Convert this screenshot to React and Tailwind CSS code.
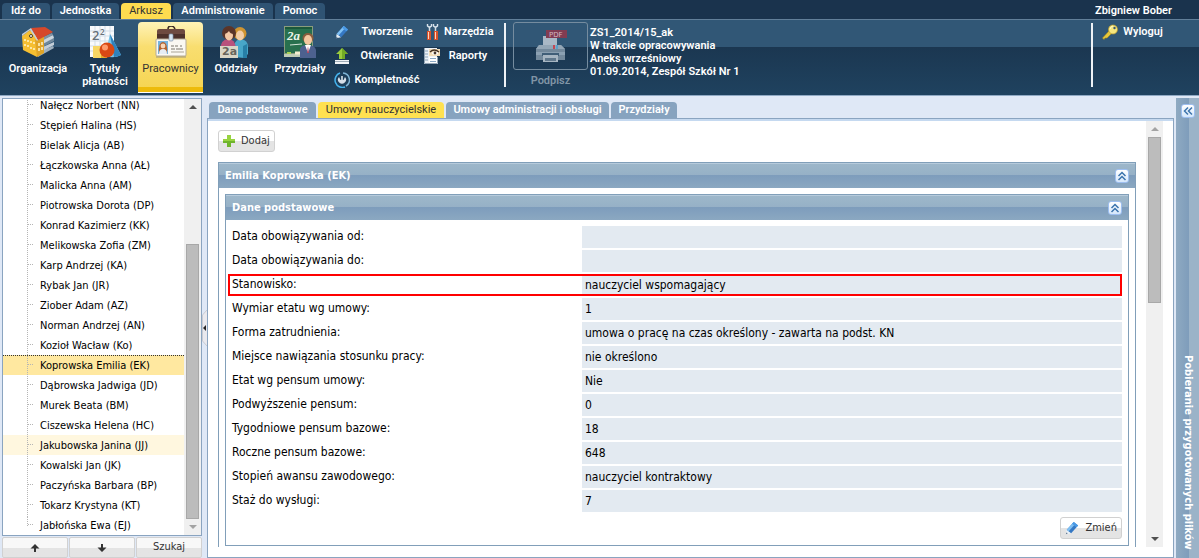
import React, { useState } from "react";

const menuTabs = [
  { name: "Idź do", width: "w-12" },
  { name: "Jednostka", width: "w-[67px]" },
  { name: "Arkusz", width: "w-[50px]" },
  { name: "Administrowanie", width: "w-[100px]" },
  { name: "Pomoc", width: "w-[50px]" },
];

const contractTabs = [
  { name: "Dane podstawowe", width: "w-[107px]" },
  { name: "Umowy nauczycielskie", width: "w-[126px]" },
  { name: "Umowy administracji i obsługi", width: "w-[163px]" },
  { name: "Przydziały", width: "w-[66px]" },
];

const employees = [
  "Nałęcz Norbert (NN)",
  "Stępień Halina (HS)",
  "Bielak Alicja (AB)",
  "Łączkowska Anna (AŁ)",
  "Malicka Anna (AM)",
  "Piotrowska Dorota (DP)",
  "Konrad Kazimierz (KK)",
  "Melikowska Zofia (ZM)",
  "Karp Andrzej (KA)",
  "Rybak Jan (JR)",
  "Ziober Adam (AZ)",
  "Norman Andrzej (AN)",
  "Kozioł Wacław (Ko)",
  "Koprowska Emilia (EK)",
  "Dąbrowska Jadwiga (JD)",
  "Murek Beata (BM)",
  "Ciszewska Helena (HC)",
  "Jakubowska Janina (JJ)",
  "Kowalski Jan (JK)",
  "Paczyńska Barbara (BP)",
  "Tokarz Krystyna (KT)",
  "Jabłońska Ewa (EJ)",
];

const fields = [
  { id: "od", label: "Data obowiązywania od:", value: "" },
  { id: "do", label: "Data obowiązywania do:", value: "" },
  { id: "stanowisko", label: "Stanowisko:", value: "nauczyciel wspomagający", marked: true },
  { id: "wymiar", label: "Wymiar etatu wg umowy:", value: "1" },
  { id: "forma", label: "Forma zatrudnienia:", value: "umowa o pracę na czas określony - zawarta na podst. KN" },
  { id: "miejsce", label: "Miejsce nawiązania stosunku pracy:", value: "nie określono" },
  { id: "etat", label: "Etat wg pensum umowy:", value: "Nie" },
  { id: "podwyzszenie", label: "Podwyższenie pensum:", value: "0" },
  { id: "tygodniowe", label: "Tygodniowe pensum bazowe:", value: "18" },
  { id: "roczne", label: "Roczne pensum bazowe:", value: "648" },
  { id: "awans", label: "Stopień awansu zawodowego:", value: "nauczyciel kontraktowy" },
  { id: "staz", label: "Staż do wysługi:", value: "7" },
];

// ---------- icons ----------

function BuildingIcon() {
  return (
    <svg width="32" height="32" viewBox="0 0 32 32">
      <path d="M14 27l17-7 1 2-16 9z" fill="#9fb0be" />
      <path d="M14 24l18-8v3l-17 9z" fill="#c3ced8" />
      <path d="M14 20l18-8v3l-17 9z" fill="#6f879a" />
      <path d="M15 16l16-7 1 3-17 9z" fill="#ccd6de" />
      <path d="M16 13l14-6 1 2-15 8z" fill="#7e95a7" />
      <path d="M0 10l8-6 7 6v21L1 24z" fill="#f6bf32" />
      <path d="M13 14l9-4v17l-7 4z" fill="#e0a528" />
      <path d="M9 2l14-1 8 5-15 8z" fill="#d6482a" />
      <path d="M9 2l7 12-1 1L8 4 0 10V8z" fill="#c7cfd6" />
      <circle cx="9" cy="10" r="1.500" fill="#fff" stroke="#4c4020" />
      <path d="M3 13v2M6 14v2M9 15v2M12 16v2M3 18v2M6 19v2M9 21v2M12 22v2M17 17v3M20 16v3M17 22v3M20 21v3" stroke="#fff5c9" strokeWidth="1.500" />
    </svg>
  );
}

function MathIcon() {
  return (
    <svg width="32" height="32" viewBox="0 0 32 32">
      <path d="M1 0h24v31H1z" fill="#f8fafc" />
      <path d="M1 5h24M1 10h24M1 15h24M1 20h24M1 25h24M6 0v31M11 0v31M16 0v31M21 0v31" stroke="#d3dde8" />
      <text x="3" y="14" fontSize="13" fill="#667079" fontFamily="Open Sans, sans-serif">2</text>
      <text x="11" y="9" fontSize="8" fill="#667079" fontFamily="Open Sans, sans-serif">2</text>
      <path d="M21 8l11 21q-7 4-16 1z" fill="#79c4ea" />
      <path d="M21 8l11 21q-4 2-7 2z" fill="#2f82bd" />
      <path d="M4 20h8v12H4z" fill="#f7d765" />
      <path d="M12 20h6v12h-6z" fill="#e2aa2c" />
      <circle cx="18" cy="24" r="7.500" fill="#d94814" />
      <circle cx="16" cy="21.500" r="3" fill="#ff9a6c" />
    </svg>
  );
}

function BadgeIcon() {
  return (
    <svg width="32" height="32" viewBox="0 0 32 32">
      <path d="M13 3q0-3 3-3t4 3" fill="none" stroke="#3d2a24" strokeWidth="1.500" />
      <rect x="2" y="3" width="28" height="14" rx="2" fill="#6e4a40" />
      <path d="M2 8h28v5H2z" fill="#4d312b" />
      <rect x="1" y="13" width="30" height="17" rx="1" fill="#faf8f2" stroke="#b5ab97" />
      <rect x="14" y="8" width="4" height="7" rx="1" fill="#d6e5f2" stroke="#8297ad" strokeWidth=".7" />
      <rect x="3" y="15" width="10" height="13" fill="#75b4e0" />
      <path d="M4 28q-1-12 4-12t4 12z" fill="#b3622e" />
      <circle cx="8" cy="20" r="2.400" fill="#f8d6b8" />
      <path d="M4 28q0-5 4-5t4 5z" fill="#e6edf5" />
      <path d="M16 20h3m1 0h3m2 0h2M16 23h4m1 0h7" stroke="#7b766c" />
      <path d="M16 26h13" stroke="#aaa496" />
      <path d="M1 31h30" stroke="#9f967f" />
    </svg>
  );
}

function ClassIcon() {
  return (
    <svg width="32" height="32" viewBox="0 0 32 32">
      <path d="M14 31V19q2-6 7-6 7 1 7 8v7l-4 4z" fill="#48a6c9" />
      <path d="M23 20v12h4V18z" fill="#277fa7" />
      <circle cx="20" cy="7.500" r="6.500" fill="#cf9431" />
      <ellipse cx="20" cy="9.500" rx="4" ry="5" fill="#f3cda6" />
      <path d="M0 24q1-11 8-11t8 9v3z" fill="#b8527c" />
      <circle cx="9" cy="7" r="7" fill="#5b3529" />
      <ellipse cx="9" cy="9.500" rx="4" ry="5" fill="#f4c9a6" />
      <path d="M4 8q1-5 5-5 4 1 5 5-4 0-5-3-2 3-5 3z" fill="#5b3529" />
      <path d="M0 20h18v12H0z" fill="#d9d6c6" />
      <text x="2" y="29" fontSize="11" fontWeight="600" fill="#67655c" fontFamily="DejaVu Sans, sans-serif">2a</text>
    </svg>
  );
}

function BoardIcon() {
  return (
    <svg width="32" height="32" viewBox="0 0 32 32">
      <path d="M0 0h29v30H0z" fill="#8a9c7c" />
      <path d="M1 1h27v26H1z" fill="#28704e" />
      <path d="M1 1h27v2H1z" fill="#1b583b" />
      <text x="3" y="14" fontSize="13" fontStyle="italic" fill="#edf5e8" fontFamily="Liberation Serif, serif">2a</text>
      <path d="M6 19l12-1" stroke="#d5e5d8" />
      <path d="M0 28h29v3H0z" fill="#bfcbb5" />
      <path d="M3 27h4" stroke="#a9d058" strokeWidth="2" />
      <path d="M11 27h5" stroke="#f3ecd0" strokeWidth="3" />
      <path d="M16 32v-9q1-4 7-4 8 0 9 5v8z" fill="#4d618f" />
      <path d="M21 19l3 8 3-8z" fill="#fff" />
      <path d="M24 20l-1 7h2z" fill="#b04560" />
      <ellipse cx="24" cy="12" rx="5.500" ry="5" fill="#8a5d3d" />
      <ellipse cx="24" cy="14" rx="4" ry="5" fill="#f4c8a0" />
    </svg>
  );
}

function PencilIcon() {
  return (
    <svg width="14" height="14" viewBox="0 0 16 16">
      <path d="M1 15l1-5 5 4z" fill="#e9f1f8" />
      <path d="M2 10L10 1l5 4-8 9z" fill="#3578c4" />
      <path d="M2 10L10 1l2 2-8 9z" fill="#7fc0f4" />
      <path d="M10 1l5 4-2 2-5-4z" fill="#4a9ae6" />
      <path d="M1 15l1-2 1 1z" fill="#233e5c" />
    </svg>
  );
}

function ToolsIcon() {
  return (
    <svg width="16" height="16" viewBox="0 0 16 16">
      <path d="M5.500 3v5M11.500 3v5" stroke="#d5dde4" strokeWidth="1.500" />
      <path d="M3.500 0v2q2 2 4 0V0M9.500 0v2q2 2 4 0V0" fill="none" stroke="#d9e3ec" strokeWidth="1.400" />
      <path d="M3 7h4v9H3zM10 7h4v9h-4z" fill="#d8512a" />
      <path d="M4.500 8v7M11.500 8v7" stroke="#fbd4c0" />
    </svg>
  );
}

function OpenIcon() {
  return (
    <svg width="16" height="16" viewBox="0 0 16 16">
      <path d="M1 12h14v4H1z" fill="#f2f5f8" />
      <path d="M1 13.500h14" stroke="#9fadb8" />
      <path d="M8 0l6 6h-3v5H5V6H2z" fill="#9acb3c" />
      <path d="M8 0l6 6h-3v5H8z" fill="#72aa25" />
    </svg>
  );
}

function ReportIcon() {
  return (
    <svg width="16" height="16" viewBox="0 0 16 16">
      <path d="M0 0h13v16H0z" fill="#eef2f6" />
      <path d="M1 3h3M1 6h3M1 9h3M1 12h3" stroke="#8aa3ba" />
      <path d="M5 1h11v7H5z" fill="#f2dcb8" />
      <path d="M6 4q4-4 9 0" fill="none" stroke="#433022" strokeWidth="1.400" />
      <ellipse cx="11" cy="5" rx="3" ry="1.600" fill="#fff" />
      <circle cx="11" cy="5" r="1.400" fill="#44352c" />
      <path d="M5 9h9v7H5z" fill="#fff" />
      <path d="M6 10.500h6M6 13.500h6" stroke="#8ba8c4" />
      <path d="M.5 0v15.500h13V9" fill="none" stroke="#93a5b6" />
    </svg>
  );
}

function PowerIcon() {
  return (
    <svg width="16" height="16" viewBox="0 0 16 16">
      <path d="M6 1a7 7 0 1 0 5 14" fill="none" stroke="#45b4ee" strokeWidth="1.500" />
      <path d="M9 1a7 7 0 0 1 3 13" fill="none" stroke="#7fb4d6" strokeWidth="1.500" />
      <path d="M5 5a4 4 0 1 0 6 0L9.500 8h-3z" fill="#d5dee8" />
      <path d="M8 4v4" stroke="#e9eff5" strokeWidth="1.500" />
    </svg>
  );
}

function PrinterIcon() {
  return (
    <svg width="32" height="34" viewBox="0 0 32 34">
      <path d="M8 7h14v11H8z" fill="#a9b8c6" />
      <path d="M4 16h22l4 4v11H1V20z" fill="#73899c" />
      <path d="M4 16h22l4 4H1z" fill="#93a6b6" />
      <path d="M1 23h29v3H1z" fill="#8ba0b2" />
      <path d="M7 24h17v3H7z" fill="#405e78" />
      <path d="M8 26h15v7H8z" fill="#a7b6c3" />
      <path d="M10 29h11v3H10z" fill="#60788d" />
      <path d="M18 16h2v4h-2z" fill="#c34855" />
      <path d="M21 16h2v4h-2z" fill="#5ba0c8" />
      <path d="M11 1h21v8H11z" fill="#823c52" />
      <text x="14" y="8" fontSize="7" fill="#d0b7c3" fontFamily="DejaVu Sans, sans-serif">PDF</text>
    </svg>
  );
}

function KeyIcon() {
  return (
    <svg width="16" height="16" viewBox="0 0 16 16">
      <path d="M7 7l3 2-5 5H3l-1 1.500L.5 14z" fill="#e6c83c" stroke="#a98a1a" strokeWidth=".6" />
      <circle cx="11" cy="5.500" r="4.500" fill="#f6e67c" stroke="#b99a2a" strokeWidth=".7" />
      <circle cx="12.500" cy="4" r="1.200" fill="#395671" />
      <path d="M8 5q1-3 3-3" stroke="#fffbd0" fill="none" />
    </svg>
  );
}

function PlusIcon() {
  return (
    <svg width="12" height="12" viewBox="0 0 12 12">
      <path d="M4 0h4v4h4v4H8v4H4V8H0V4h4z" fill="#6fb52c" />
      <path d="M4 0h4v4h4v2H0V4h4z" fill="#98d341" />
    </svg>
  );
}

function Arrow({ down }) {
  return (
    <svg width="10" height="8" viewBox="0 0 10 8" className={down ? "rotate-180" : ""}>
      <path d="M5 0l4.500 4.500H6V8H4V4.500H.5z" fill="#333" />
    </svg>
  );
}

function Chevrons({ left }) {
  return (
    <svg width="10" height="10" viewBox="0 0 10 10" className={left ? "-rotate-90" : ""}>
      <path d="M1.500 5L5 1.500 8.500 5M1.500 9L5 5.500 8.500 9" fill="none" stroke="#3c74ad" strokeWidth="1.500" />
    </svg>
  );
}

// ---------- small parts ----------

const bigButtons = [
  { name: "Organizacja", icon: <BuildingIcon />, width: "w-[68px]" },
  { name: "Tytuły płatności", icon: <MathIcon />, width: "w-[66px]" },
  { name: "Pracownicy", icon: <BadgeIcon />, width: "w-[65px]" },
  { name: "Oddziały", icon: <ClassIcon />, width: "w-[66px]" },
  { name: "Przydziały", icon: <BoardIcon />, width: "w-[62px]" },
];

function SmallButton({ icon, text, width }) {
  return (
    <button className="flex h-6 items-center gap-1 font-semibold">
      <span className="flex w-4 justify-center">{icon}</span>
      <span className={`${width} text-center whitespace-nowrap`}>{text}</span>
    </button>
  );
}

function ToolButton({ icon, children }) {
  return (
    <button className="flex h-[22px] items-center gap-1.5 rounded-[3px] border border-[#d1d1d1] bg-linear-to-b from-white from-50% to-[#e4e4e4] to-50% px-1 text-[11px] text-[#333]">
      {icon}
      {children}
    </button>
  );
}

function CollapseButton({ left, label }) {
  return (
    <button
      aria-label={label}
      className="flex size-[14px] shrink-0 items-center justify-center rounded-[3px] border border-[#9ebff0] bg-linear-to-b from-white to-[#d5e7fb]"
    >
      <Chevrons left={left} />
    </button>
  );
}

function ScrollBar({ thumb, topColor, bottomColor }) {
  return (
    <div className="flex w-[17px] shrink-0 flex-col items-center bg-[#f0f0f0]">
      <div className="flex h-4 shrink-0 items-center">
        <svg width="8" height="4" viewBox="0 0 8 4"><path d="M4 0l4 4H0z" fill={topColor} /></svg>
      </div>
      <div className="flex w-full flex-1 flex-col px-0.5">{thumb}</div>
      <div className="flex h-4 shrink-0 items-center">
        <svg width="8" height="4" viewBox="0 0 8 4"><path d="M0 0h8L4 4z" fill={bottomColor} /></svg>
      </div>
    </div>
  );
}

function PanelHeader({ title }) {
  return (
    <div className="h-[25px] border-t border-[#b7cbdc] bg-linear-to-b from-[#9db7ca] to-[#8ea9c2]">
      <div className="flex h-6 items-center justify-between bg-linear-to-b from-transparent from-45% via-[#7d9cbc] via-45% to-[#8ba8c1] px-1.5">
        <h2 className="text-[11px] font-bold text-white">{title}</h2>
        <CollapseButton label={`Zwiń: ${title}`} />
      </div>
    </div>
  );
}

// ---------- page parts ----------

function Header() {
  const [tab, setTab] = useState("Arkusz");

  return (
    <header className="shrink-0 border-b border-[#8fa9c4] font-['Roboto',sans-serif] text-[11px] text-white">
      <nav className="flex h-[19px] items-end gap-0.5 bg-[#1a334d] pl-0.5">
        {menuTabs.map((t) => (
          <button
            key={t.name}
            onClick={() => setTab(t.name)}
            className={`${t.width} h-4 rounded-t whitespace-nowrap ${
              tab === t.name ? "bg-[#ffdc50] text-[#333]" : "bg-[#2f5373] font-semibold"
            }`}
          >
            {t.name}
          </button>
        ))}
        <span className="ml-auto pr-[27px] font-semibold">Zbigniew Bober</span>
      </nav>

      <div className="flex h-[76px] border-t border-[#627f99] bg-[#315776]">
        <div className="flex w-full bg-linear-to-b from-transparent from-36% via-[#1b3751] via-36% to-[#1f425f]">
          <div className="flex shrink-0 pt-0.5 pl-1">
            {bigButtons.map((b) => (
              <button
                key={b.name}
                className={`${b.width} flex h-[71px] flex-col items-center gap-1 rounded-t-sm leading-[13px] ${
                  b.name === "Pracownicy"
                    ? "border-b border-white bg-linear-to-b from-[#fff3b6] via-[#f9de70] via-35% to-[#f5d450] pt-1 text-[#333] shadow-[inset_0_-5px_0_#edbb0b]"
                    : "pt-1 font-semibold"
                }`}
              >
                {b.icon}
                <span>{b.name}</span>
              </button>
            ))}
          </div>

          <div className="flex shrink-0 gap-1 pl-[3px]">
            <div>
              <SmallButton icon={<PencilIcon />} text="Tworzenie" width="w-[66px]" />
              <SmallButton icon={<OpenIcon />} text="Otwieranie" width="w-[66px]" />
              <SmallButton icon={<PowerIcon />} text="Kompletność" width="w-[66px]" />
            </div>
            <div>
              <SmallButton icon={<ToolsIcon />} text="Narzędzia" width="w-12" />
              <SmallButton icon={<ReportIcon />} text="Raporty" width="w-12" />
            </div>
          </div>

          <div className="mt-[3px] ml-3 h-16 w-0.5 shrink-0 bg-[#eef2f6]" />
          <div className="flex shrink-0 flex-col items-center gap-1 pt-0.5 pl-[7px]">
            <button disabled aria-labelledby="podpisz" className="flex h-12 w-[75px] items-center justify-center rounded-[3px] border border-[#758c9f]">
              <PrinterIcon />
            </button>
            <span id="podpisz" className="leading-[13px] font-semibold text-[#8195a6]">Podpisz</span>
          </div>
          <p className="pt-1.5 pl-0.5 leading-[13px] font-semibold">
            ZS1_2014/15_ak<br />
            W trakcie opracowywania<br />
            Aneks wrześniowy<br />
            01.09.2014, Zespół Szkół Nr 1
          </p>

          <div className="ml-auto flex w-[108px] shrink-0">
            <div className="mt-[3px] mr-[9px] h-16 w-0.5 shrink-0 bg-[#eef2f6]" />
            <SmallButton icon={<KeyIcon />} text="Wyloguj" width="w-[42px]" />
          </div>
        </div>
      </div>
    </header>
  );
}

function EmployeeList() {
  const [selected, setSelected] = useState("Koprowska Emilia (EK)");

  return (
    <aside className="flex w-[200px] shrink-0 flex-col">
      <div className="flex min-h-0 flex-1 border border-[#8aa4c0] bg-white">
        <ul className="flex min-w-0 flex-1 flex-col justify-end overflow-hidden">
          {employees.map((name, i) => {
            let look = "border-transparent";
            if (name === selected) look = "border-[#333] bg-[#ffe8a0]";
            else if (name.startsWith("Jakubowska")) look = "border-transparent bg-[#fff7df]";
            return (
              <li key={name} className={`flex h-5 shrink-0 border-t border-dotted pl-6 ${look}`}>
                <span className={`w-0 border-l border-dotted border-[#b5b5b5] ${i === employees.length - 1 ? "h-2.5" : ""}`} />
                <span className="mt-2 mr-[7px] h-0 w-[5px] border-t border-dotted border-[#b5b5b5]" />
                <button onClick={() => setSelected(name)} className="text-[11px] leading-[19px] whitespace-nowrap text-black">
                  {name}
                </button>
              </li>
            );
          })}
        </ul>
        <ScrollBar
          topColor="#505050"
          bottomColor="#a3a3a3"
          thumb={<div className="mt-auto h-[275px] border border-[#a8a8a8] bg-[#bcbcbc]" />}
        />
      </div>
      <div className="mt-px grid h-[21px] grid-cols-3 gap-px text-[11px] text-[#333]">
        <button aria-label="W górę" className="flex items-center justify-center rounded-xs border border-[#d1d1d1] bg-linear-to-b from-[#f8f8f8] from-50% to-[#e4e4e4] to-50%">
          <Arrow />
        </button>
        <button aria-label="W dół" className="flex items-center justify-center rounded-xs border border-[#d1d1d1] bg-linear-to-b from-[#f8f8f8] from-50% to-[#e4e4e4] to-50%">
          <Arrow down />
        </button>
        <button className="rounded-xs border border-[#d1d1d1] bg-linear-to-b from-[#f8f8f8] from-50% to-[#e4e4e4] to-50%">Szukaj</button>
      </div>
    </aside>
  );
}

function ContractForm() {
  return (
    <section className="mt-2.5 border border-b-0 border-[#819fb9] bg-white">
      <PanelHeader title="Emilia Koprowska (EK)" />
      <div className="px-1.5 pt-1.5 pb-4">
        <div className="border border-[#819fb9]">
          <PanelHeader title="Dane podstawowe" />
          <form className="flex flex-col gap-0.5 py-1.5 pr-1.5 pl-0.5">
            {fields.map((f) => (
              <div
                key={f.id}
                className={`flex h-[22px] pl-1 text-[12px] text-black ${f.marked ? "outline-2 -outline-offset-2 outline-[#ff0000]" : ""}`}
              >
                <label htmlFor={f.id} className="w-[350px] shrink-0 leading-5">{f.label}</label>
                <input
                  id={f.id}
                  readOnly
                  defaultValue={f.value}
                  className="min-w-0 flex-1 bg-[#e3eaf1] px-[3px] outline-none"
                />
              </div>
            ))}
            <div className="mt-[3px] flex justify-end">
              <ToolButton icon={<PencilIcon />}>Zmień</ToolButton>
            </div>
          </form>
        </div>
      </div>
    </section>
  );
}

function Main() {
  const [tab, setTab] = useState("Umowy nauczycielskie");

  return (
    <main className="flex min-w-0 flex-1 flex-col pt-1">
      <nav className="flex h-4 shrink-0 gap-0.5 pl-0.5 font-['Roboto',sans-serif] text-[11px]">
        {contractTabs.map((t) => (
          <button
            key={t.name}
            onClick={() => setTab(t.name)}
            className={`${t.width} rounded-t whitespace-nowrap ${
              tab === t.name ? "bg-[#ffe150] text-[#333]" : "bg-[#87a3bf] font-semibold text-white"
            }`}
          >
            {t.name}
          </button>
        ))}
      </nav>
      <div className="flex min-h-0 flex-1 flex-col border border-[#8aa4c0] bg-white">
        <div className="h-0.5 shrink-0 bg-[#c5d9f0]" />
        <div className="mb-2.5 flex min-h-0 flex-1 pr-2.5">
          <div className="min-w-0 flex-1 overflow-hidden px-2.5 pt-[9px]">
            <ToolButton icon={<PlusIcon />}>Dodaj</ToolButton>
            <ContractForm />
          </div>
          <ScrollBar
            topColor="#a3a3a3"
            bottomColor="#505050"
            thumb={<div className="h-[166px] border border-[#a8a8a8] bg-[#bcbcbc]" />}
          />
        </div>
      </div>
    </main>
  );
}

function App() {
  return (
    <div className="flex h-screen flex-col overflow-hidden bg-[#dfe8f6] font-['DejaVu_Sans_Condensed',sans-serif]">
      <Header />
      <div className="flex min-h-0 flex-1 pt-0.5 pl-0.5">
        <EmployeeList />
        <button aria-label="Zwiń listę" className="flex w-[5px] shrink-0 items-center">
          <svg width="5" height="36" viewBox="0 0 5 36">
            <path d="M5 0L.5 5v26L5 36" fill="#e9e9ee" stroke="#c8cbd2" />
            <path d="M4 15v6l-3-3z" fill="#222" />
          </svg>
        </button>
        <Main />
        <aside className="ml-0.5 flex w-[23px] shrink-0 flex-col items-center bg-linear-to-r from-[#8faac2] from-0% via-[#7f9dbb] via-55% to-[#9bb3c8] to-55% pt-1.5">
          <CollapseButton left label="Rozwiń" />
          <span className="mt-auto pb-2 text-[11px] font-bold whitespace-nowrap text-white [writing-mode:vertical-rl]">
            Pobieranie przygotowanych plików
          </span>
        </aside>
      </div>
    </div>
  );
}

export default App;
